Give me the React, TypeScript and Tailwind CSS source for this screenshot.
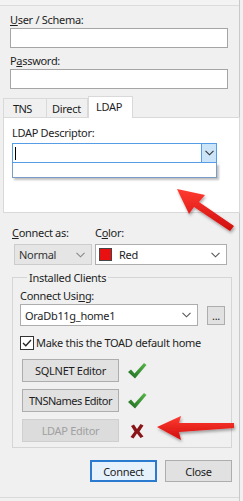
import React from "react";

// Toad "New Connection" login pane – LDAP tab selected

const Check = () => (
  <svg width="20" height="18" viewBox="0 0 20 18">
    <defs>
      <linearGradient id="chk" x1="0" y1="1" x2="1" y2="0">
        <stop offset="0" stopColor="#1f6b22" />
        <stop offset="1" stopColor="#58b848" />
      </linearGradient>
    </defs>
    <path d="M1 10 L4 7.5 L7.5 11.5 L17 1 L19.5 3 L8 16.5 Z" fill="url(#chk)" />
  </svg>
);

const Cross = () => (
  <svg width="16" height="16" viewBox="0 0 16 16">
    <path d="M2 3 L5 1.5 L8 6 L11.5 1 L14.5 2.5 L10.5 8.5 L14.5 13.5 L11.5 15 L8 10.5 L4.5 15.5 L1.5 14 L5.5 8.5 Z" fill="#8a1518" />
  </svg>
);

const Chevron = ({ color = "#555" }: { color?: string }) => (
  <svg width="9" height="6" viewBox="0 0 9 6">
    <path d="M0.5 0.8 L4.5 4.8 L8.5 0.8" stroke={color} strokeWidth="1.1" fill="none" />
  </svg>
);

const Arrows = () => (
  <svg className="absolute inset-0 pointer-events-none" width="243" height="501" viewBox="0 0 243 501">
    <defs>
      <linearGradient id="red" x1="0" y1="0" x2="0" y2="1">
        <stop offset="0" stopColor="#ff3b30" />
        <stop offset="1" stopColor="#d00d0d" />
      </linearGradient>
      <filter id="sh" x="-20%" y="-20%" width="140%" height="140%">
        <feDropShadow dx="1" dy="2" stdDeviation="1.5" floodColor="#000" floodOpacity="0.35" />
      </filter>
    </defs>
    <polygon
      points="177,189 205,195 199,202 234,226 230,231 194,207 189,214"
      fill="url(#red)"
      filter="url(#sh)"
    />
    <polygon
      points="157,427 181,416 179,423 234,423 234,428 179,432 181,440"
      fill="url(#red)"
      filter="url(#sh)"
    />
  </svg>
);

export default function App() {
  return (
    <div
      className="relative w-[243px] h-[501px] overflow-hidden bg-[#f0f0f0] text-[11px] leading-[15px] tracking-[-0.3px] text-[#1e1e1e]"
      style={{ fontFamily: '"Noto Sans", "Open Sans", sans-serif' }}
    >
      <div className="w-[240px] h-[501px] border-r border-[#c9c9c9]">
        {/* strip from the pane above */}
        <div className="h-[6px] border-b border-[#dcdcdc] bg-[#f3f3f3]" />

        <div className="px-[10px]">
          <div className="mt-[6px] h-[15px]">
            <span className="underline">U</span>ser / Schema:
          </div>
          <div className="mt-[1px] h-[20px] w-[218px] bg-white border border-[#a5a5a5]" />
          <div className="mt-[5px] h-[15px]">
            P<span className="underline">a</span>ssword:
          </div>
          <div className="mt-[1px] h-[20px] w-[218px] bg-white border border-[#a5a5a5]" />
        </div>

        {/* tabs */}
        <div className="mt-[7px] pl-[3px] flex items-end h-[21px]">
          <div className="w-[44px] h-[19px] border border-b-0 border-[#d9d9d9] flex items-center pl-[9px] tracking-[-0.6px]">
            TNS
          </div>
          <div className="w-[41px] h-[19px] border-t border-r border-[#d9d9d9] flex items-center pl-[5px]">
            Direct
          </div>
          <div className="relative z-10 -mb-px w-[45px] h-[22px] bg-white border border-b-0 border-[#d9d9d9] flex items-start pt-[2px] pl-[7px]">
            LDAP
          </div>
        </div>
        <div className="ml-[3px] w-[237px] h-[96px] bg-white border border-[#d9d9d9] px-[8px]">
          <div className="mt-[7px] h-[15px]">LDAP Descriptor:</div>
          <div className="mt-[3px] w-[205px] h-[20px] border border-[#569de5] flex">
            <div className="flex-1 flex items-center pl-[2px]">
              <div className="w-px h-[13px] bg-black" />
            </div>
            <div className="w-[15px] h-full bg-[#cce4f7] border-l border-[#569de5] flex items-center justify-center">
              <Chevron color="#333" />
            </div>
          </div>
          <div className="w-[205px] h-[15px] border border-t-0 border-[#7a9cc6] bg-white shadow-[2px_2px_2px_rgba(0,0,0,0.25)]" />
        </div>

        {/* connect as / color */}
        <div className="flex mt-[12px] px-[12px]">
          <div className="w-[88px]">
            <div className="h-[15px]">
              <span className="underline">C</span>onnect as:
            </div>
            <div className="mt-[4px] ml-[2px] w-[78px] h-[21px] bg-[#e5e5e5] border border-[#cccccc] flex items-center justify-between pl-[4px] pr-[6px] text-[#333]">
              Normal
              <Chevron color="#888" />
            </div>
          </div>
          <div>
            <div className="h-[15px]">
              C<span className="underline">o</span>lor:
            </div>
            <div className="mt-[4px] w-[132px] h-[21px] bg-white border border-[#adadad] flex items-center pl-[3px] pr-[6px]">
              <div className="w-[13px] h-[13px] bg-[#e81010] border border-[#444]" />
              <span className="ml-[7px] flex-1">Red</span>
              <Chevron />
            </div>
          </div>
        </div>

        {/* installed clients group */}
        <fieldset className="mt-[5px] ml-[12px] w-[220px] h-[178px] border border-[#d5d5d5] pl-[7px]">
          <legend className="ml-[7px] px-[2px] h-[15px]">Installed Clients</legend>
          <div className="mt-[3px] h-[15px]">
            Connect Usi<span className="underline">n</span>g:
          </div>
          <div className="mt-[1px] flex items-center">
            <div className="w-[178px] h-[22px] bg-white border border-[#adadad] flex items-center justify-between pl-[4px] pr-[6px]">
              OraDb11g_home1
              <Chevron />
            </div>
            <div className="ml-[9px] w-[18px] h-[19px] bg-[#e1e1e1] border border-[#adadad] flex items-end justify-center pb-[3px] leading-none text-[11px]">
              ...
            </div>
          </div>
          <div className="mt-[9px] flex items-center">
            <div className="w-[14px] h-[14px] border border-[#333] bg-white flex items-center justify-center">
              <svg width="10" height="8" viewBox="0 0 10 8">
                <path d="M1 4 L3.8 6.8 L9 1" stroke="#222" strokeWidth="1.3" fill="none" />
              </svg>
            </div>
            <span className="ml-[2px]">Make this the TOAD default home</span>
          </div>
          <div className="mt-[9px] ml-[2px] flex flex-col gap-[7px]">
            <div className="flex items-center">
              <div className="w-[97px] h-[23px] bg-[#e1e1e1] border border-[#adadad] flex items-center justify-center">
                SQLNET Editor
              </div>
              <div className="ml-[8px]">
                <Check />
              </div>
            </div>
            <div className="flex items-center">
              <div className="w-[97px] h-[23px] bg-[#e1e1e1] border border-[#adadad] flex items-center justify-center tracking-[-0.5px]">
                TNSNames Editor
              </div>
              <div className="ml-[8px]">
                <Check />
              </div>
            </div>
            <div className="flex items-center">
              <div className="w-[97px] h-[23px] bg-[#dcdcdc] border border-[#cfcfcf] flex items-center justify-center text-[#a0a0a0]">
                LDAP Editor
              </div>
              <div className="ml-[10px]">
                <Cross />
              </div>
            </div>
          </div>
        </fieldset>

        {/* footer buttons */}
        <div className="mt-[12px] flex justify-end pr-[7px] gap-[8px]">
          <div className="w-[67px] h-[22px] bg-[#e5f1fb] border-2 border-[#2a7ad0] flex items-center justify-center">
            Connect
          </div>
          <div className="w-[67px] h-[22px] bg-[#e1e1e1] border border-[#adadad] flex items-center justify-center">
            Close
          </div>
        </div>
        <div className="mt-[15px] border-t border-[#d9d9d9]" />
      </div>
      <Arrows />
    </div>
  );
}
